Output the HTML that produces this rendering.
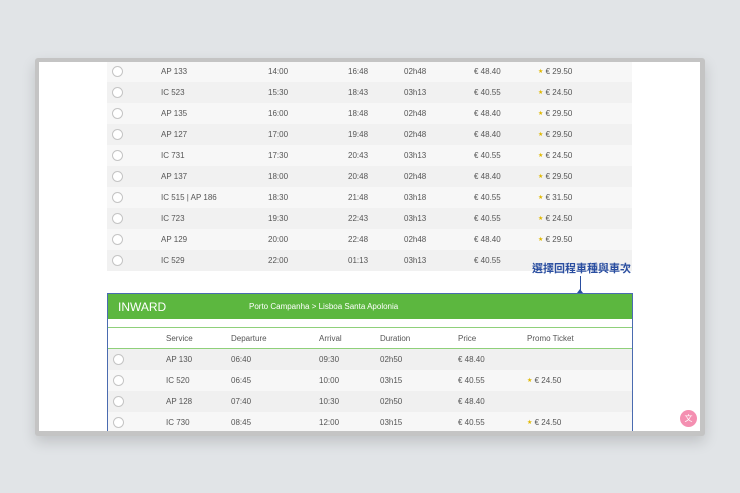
<!DOCTYPE html><html><head><style>
*{margin:0;padding:0;box-sizing:border-box}
body{width:740px;height:493px;background:#e1e4e7;position:relative;overflow:hidden;font-family:"Liberation Sans",sans-serif;font-size:8px;color:#555}
.win{position:absolute;left:35px;top:58px;width:670px;height:378px;background:#c4c4c4;border-radius:3px;box-shadow:0 6px 14px rgba(0,0,0,.15)}
.in{position:absolute;left:39px;top:62px;width:661px;height:369px;background:#fff;overflow:hidden}
.row{position:absolute;height:21px;width:525px}
.row span{position:absolute;top:6px;white-space:nowrap}
.r{position:absolute;left:5px;top:5px;width:11px;height:11px;border:1px solid #c4c4c4;border-radius:50%;background:#fff}
.st{color:#e0b800;font-size:6px;font-weight:normal;vertical-align:1px}
</style></head><body>
<div class="win"></div>
<div class="in">
<div id="top"></div>
<div style="position:absolute;left:493px;top:198px;color:#2a4ea0;font-weight:bold;font-size:11px;font-family:'Liberation Sans','Noto Sans CJK TC',sans-serif">選擇回程車種與車次</div>
<div style="position:absolute;left:541px;top:214px;width:1px;height:17px;background:#2a4ea0"></div>
<div style="position:absolute;left:538px;top:227px;border:3px solid transparent;border-top:none;border-bottom:4px solid #2a4ea0"></div>
<div style="position:absolute;left:68px;top:231px;width:526px;height:140px;border:1px solid #4a6bb0;background:#fff">
 <div style="height:25px;background:#5cb73f;color:#fff;position:relative">
  <span style="position:absolute;left:10px;top:6px;font-size:12px">INWARD</span>
  <span style="position:absolute;left:141px;top:8px;font-size:8px">Porto Campanha &gt; Lisboa Santa Apolonia</span>
 </div>
 <div style="position:absolute;top:33px;left:0;width:524px;height:22px;border-top:1px solid #8fd07a;border-bottom:1px solid #8fd07a">
  <span style="position:absolute;left:58px;top:6px">Service</span><span style="position:absolute;left:123px;top:6px">Departure</span><span style="position:absolute;left:211px;top:6px">Arrival</span><span style="position:absolute;left:272px;top:6px">Duration</span><span style="position:absolute;left:350px;top:6px">Price</span><span style="position:absolute;left:419px;top:6px">Promo Ticket</span>
 </div>
 <div id="bot"></div>
</div>
<div style="position:absolute;left:641px;top:348px;width:17px;height:17px;border-radius:50%;background:#f48fb1;color:#fff;font-size:8px;text-align:center;line-height:17px">文</div>
</div>
<script>
var t=[["AP 133","14:00","16:48","02h48","€ 48.40","€ 29.50"],["IC 523","15:30","18:43","03h13","€ 40.55","€ 24.50"],["AP 135","16:00","18:48","02h48","€ 48.40","€ 29.50"],["AP 127","17:00","19:48","02h48","€ 48.40","€ 29.50"],["IC 731","17:30","20:43","03h13","€ 40.55","€ 24.50"],["AP 137","18:00","20:48","02h48","€ 48.40","€ 29.50"],["IC 515 | AP 186","18:30","21:48","03h18","€ 40.55","€ 31.50"],["IC 723","19:30","22:43","03h13","€ 40.55","€ 24.50"],["AP 129","20:00","22:48","02h48","€ 48.40","€ 29.50"],["IC 529","22:00","01:13","03h13","€ 40.55",""]];
var h="";t.forEach(function(r,i){var x=[122,229,309,365,435,499];h+='<div class="row" style="left:68px;top:'+(-1+i*21)+'px;background:'+(i%2?'#f1f1f1':'#f7f7f7')+'"><div class="r"></div>';r.forEach(function(c,j){if(c)h+='<span style="left:'+(x[j]-68)+'px">'+(j==5?'<b class="st">★</b> ':'')+c+'</span>'});h+='</div>'});
document.getElementById('top').innerHTML=h;
var b=[["AP 130","06:40","09:30","02h50","€ 48.40",""],["IC 520","06:45","10:00","03h15","€ 40.55","€ 24.50"],["AP 128","07:40","10:30","02h50","€ 48.40",""],["IC 730","08:45","12:00","03h15","€ 40.55","€ 24.50"]];
h="";b.forEach(function(r,i){var x=[58,123,211,272,350,419];h+='<div class="row" style="left:0;width:524px;top:'+(55+i*21)+'px;background:'+(i%2?'#f7f7f7':'#f0f0f0')+'"><div class="r"></div>';r.forEach(function(c,j){if(c)h+='<span style="left:'+x[j]+'px">'+(j==5?'<b class="st">★</b> ':'')+c+'</span>'});h+='</div>'});
document.getElementById('bot').innerHTML=h;
</script>
</body></html>
